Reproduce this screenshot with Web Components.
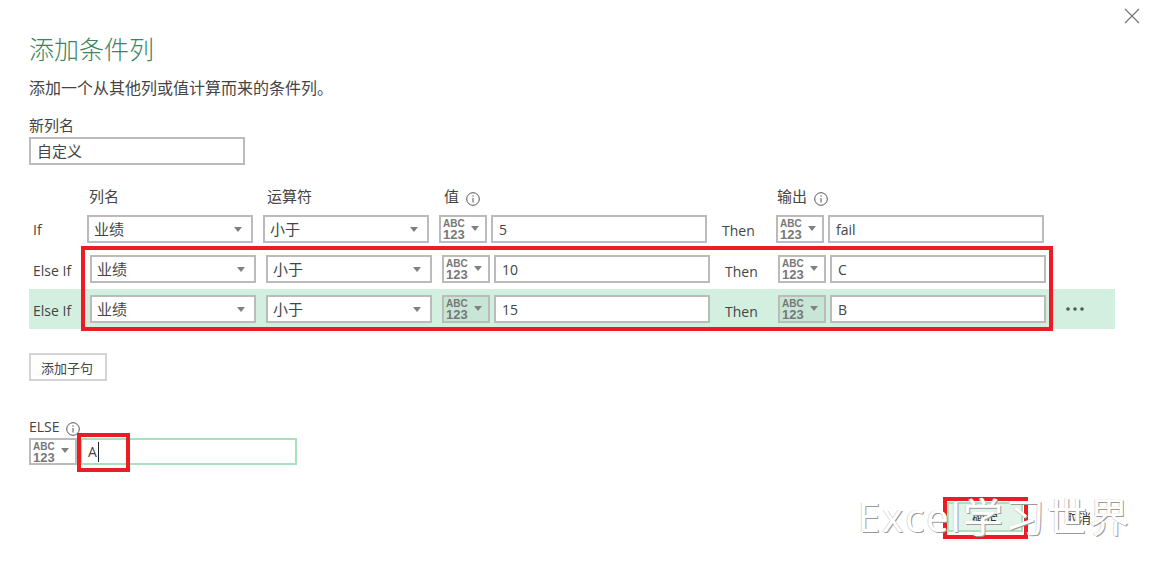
<!DOCTYPE html>
<html lang="zh-CN">
<head>
<meta charset="utf-8">
<title>添加条件列</title>
<style>
  html, body { margin: 0; height: 100%; background: #fff; overflow: hidden; }
  body { font: 14px "Open Sans", "Noto Sans CJK SC", sans-serif; color: #444; }
  /* CHINESE VALUES RUN A BIT LARGER THAN THE LATIN ONES */
  [slot=col], [slot=op], [slot=name] { font-size: 15px; padding-bottom: 2px; }
</style>
</head>
<body>

<template id="field-tpl">
  <style>
    :host { display: flex; box-sizing: border-box; width: var(--w, 216px); height: var(--h, 28px); border: 2px solid #bbb; background: #fff; align-items: center; padding: 0 6px; font-size: 14px; color: #444; }
    :host([active]) { border-color: #a8e0c2; }
    .caret { width: 1px; height: 20px; background: #222; margin-left: 1px; display: none; }
    :host([active]) .caret { display: block; }
  </style>
  <slot></slot><span class="caret"></span>
</template>

<template id="select-tpl">
  <style>
    :host { display: flex; box-sizing: border-box; width: 166px; height: 28px; border: 2px solid #bbb; background: #fff; align-items: center; justify-content: space-between; padding: 0 9px 0 5px; }
    svg { display: block; }
  </style>
  <slot></slot>
  <svg width="8" height="5" viewBox="0 0 8 5"><path d="M0 0h8L4 5z" fill="#808080"/></svg>
</template>

<template id="type-tpl">
  <style>
    :host { display: flex; box-sizing: border-box; width: 48px; height: var(--h, 28px); border: 2px solid #bbb; background: var(--type-bg, #fff); align-items: center; justify-content: space-between; padding: 0 6px 0 2px; flex: none; }
    .t { display: flex; flex-direction: column; font-family: "Liberation Sans", sans-serif; font-weight: 700; color: #777; line-height: 11px; }
    .a { font-size: 10px; }
    .n { font-size: 13px; }
    svg { display: block; margin-top: -2px; }
  </style>
  <span class="t"><span class="a">ABC</span><span class="n">123</span></span>
  <svg width="8" height="5" viewBox="0 0 8 5"><path d="M0 0h8L4 5z" fill="#808080"/></svg>
</template>

<template id="info-tpl">
  <style>
    :host { display: inline-block; width: 14px; height: 14px; vertical-align: -4px; margin-left: var(--info-gap, 7px); }
    svg { display: block; }
  </style>
  <svg width="14" height="14" viewBox="0 0 14 14" fill="none" stroke="#555">
    <circle cx="7" cy="7" r="6.3"/>
    <path d="M7 6v4.5M7 3.3v1.4"/>
  </svg>
</template>

<template id="row-tpl">
  <style>
    :host { display: flex; align-items: center; height: 40px; width: 1086px; padding-left: 4px; box-sizing: border-box; --type-bg: #fff; }
    :host([shift]) { --label: 57px; --then: 53px; --label-pad: 3px; --then-pad: 4px; }
    :host([hot]) { background: #d2efe0; --type-bg: #c8e6d6; }
    .label { width: var(--label, 54px); flex: none; padding-top: var(--label-pad, 0); }
    .gap10 { width: 10px; flex: none; }
    .gap4 { width: 4px; flex: none; }
    .then { margin-left: 15px; width: var(--then, 54px); flex: none; padding-top: var(--then-pad, 2px); }
    .dots { display: none; margin-left: 20px; }
    :host([hot]) .dots { display: block; }
  </style>
  <span class="label"><slot name="label"></slot></span>
  <cond-select><slot name="col"></slot></cond-select>
  <span class="gap10"></span>
  <cond-select><slot name="op"></slot></cond-select>
  <span class="gap10"></span>
  <type-select></type-select>
  <span class="gap4"></span>
  <text-field><slot name="value"></slot></text-field>
  <span class="then">Then</span>
  <type-select></type-select>
  <span class="gap4"></span>
  <text-field><slot name="out"></slot></text-field>
  <svg class="dots" width="18" height="4" viewBox="0 0 18 4" fill="#555"><circle cx="2" cy="2" r="1.8"/><circle cx="9" cy="2" r="1.8"/><circle cx="16" cy="2" r="1.8"/></svg>
</template>

<template id="dialog-tpl">
  <style>
    :host { display: flex; flex-direction: column; width: 1152px; height: 565px; box-sizing: border-box; padding: 8px 12px 0 29px; position: relative; overflow: hidden; }
    .close { align-self: flex-end; display: block; }
    h1 { margin: 9px 0 0; font-size: 25px; line-height: 32px; font-weight: 300; color: #3a8562; height: 32px; }
    .desc { margin-top: 13px; line-height: 20px; font-size: 16px; }
    .name-label { margin-top: 17px; line-height: 20px; font-size: 15px; }
    .name { margin-top: 2px; }
    .heads { display: flex; margin-top: 21px; height: 20px; line-height: 20px; padding-left: 60px; margin-bottom: 9px; font-size: 15px; }
    .heads span { flex: none; }
    .rows { display: flex; flex-direction: column; }
    .add { align-self: flex-start; margin-top: 24px; box-sizing: border-box; width: 78px; height: 28px; border: 2px solid #d4d4d4; background: #fff; display: flex; align-items: center; justify-content: center; font: inherit; font-size: 13px; color: #444; padding: 1px 2px 0 0; }
    .else-label { margin-top: 36px; line-height: 20px; height: 20px; --info-gap: 6px; }
    .else { display: flex; gap: 3px; margin-top: 1px; --h: 27px; }
    .actions { display: flex; justify-content: flex-end; gap: 17px; margin-top: 37px; }
    .btn { box-sizing: border-box; width: 76px; height: 30px; display: flex; align-items: center; justify-content: center; font-size: 13px; color: #333; background: #fff; }
    .btn.ok { background: #e2f3ea; border: 2px solid #a8e0c2; }
    .btn.cancel { margin-right: 24px; }
    /* ANNOTATIONS LYING OVER THE DIALOG */
    .mark { position: absolute; box-sizing: border-box; border: 4px solid #ed1c24; pointer-events: none; }
    .wm { position: absolute; left: 858px; top: 494px; font: 400 40px/46px "Open Sans", "Noto Sans CJK SC", sans-serif; letter-spacing: 2px; color: #fff; text-shadow: 1px 1px 0 #9a9a9a, -1px 0 0 #ddd; white-space: nowrap; }
  </style>
  <svg class="close" width="16" height="16" viewBox="0 0 16 16" stroke="#777" stroke-width="1.2" fill="none"><path d="M1 1l14 14M15 1L1 15"/></svg>
  <h1><slot name="title"></slot></h1>
  <div class="desc"><slot name="desc"></slot></div>
  <div class="name-label">新列名</div>
  <text-field class="name"><slot name="name"></slot></text-field>
  <div class="heads">
    <span style="width:178px">列名</span>
    <span style="width:177px">运算符</span>
    <span style="width:333px">值<info-dot></info-dot></span>
    <span>输出<info-dot></info-dot></span>
  </div>
  <div class="rows"><slot name="rows"></slot></div>
  <button class="add">添加子句</button>
  <div class="else-label">ELSE<info-dot></info-dot></div>
  <div class="else">
    <type-select></type-select>
    <text-field active style="--w:217px">A</text-field>
  </div>
  <div class="actions">
    <div class="btn ok">确定</div>
    <div class="btn cancel">取消</div>
  </div>
  <div class="mark" style="left:81px;top:246px;width:972px;height:85px"></div>
  <div class="mark" style="left:77px;top:433px;width:53px;height:39px"></div>
  <div class="mark" style="left:943px;top:497px;width:85px;height:42px"></div>
  <div class="wm">Excel学习世界</div>
</template>

<cond-dialog>
  <span slot="title">添加条件列</span>
  <span slot="desc">添加一个从其他列或值计算而来的条件列。</span>
  <span slot="name">自定义</span>
  <cond-row slot="rows" style="height:28px;margin-bottom:6px">
    <span slot="label">If</span><span slot="col">业绩</span><span slot="op">小于</span><span slot="value">5</span><span slot="out">fail</span>
  </cond-row>
  <cond-row slot="rows" shift>
    <span slot="label">Else If</span><span slot="col">业绩</span><span slot="op">小于</span><span slot="value">10</span><span slot="out">C</span>
  </cond-row>
  <cond-row slot="rows" shift hot>
    <span slot="label">Else If</span><span slot="col">业绩</span><span slot="op">小于</span><span slot="value">15</span><span slot="out">B</span>
  </cond-row>
</cond-dialog>

<script>
  // EVERY ELEMENT JUST CLONES ITS TEMPLATE INTO AN OPEN SHADOW ROOT
  const define = (name, tplId) => {
    customElements.define(name, class extends HTMLElement {
      constructor() {
        super();
        const tpl = document.getElementById(tplId);
        this.attachShadow({ mode: 'open' }).appendChild(tpl.content.cloneNode(true));
      }
    });
  };
  define('text-field', 'field-tpl');
  define('cond-select', 'select-tpl');
  define('type-select', 'type-tpl');
  define('info-dot', 'info-tpl');
  define('cond-row', 'row-tpl');
  define('cond-dialog', 'dialog-tpl');
</script>
</body>
</html>
